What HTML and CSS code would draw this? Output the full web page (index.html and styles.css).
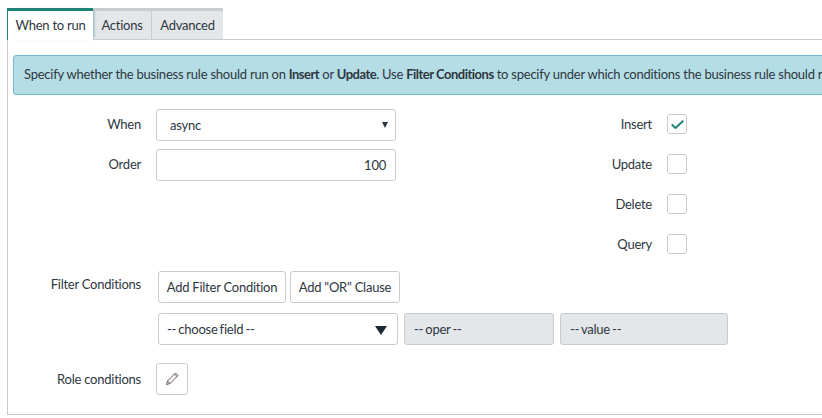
FILE: index.html
```html
<!DOCTYPE html>
<html lang="en">
<head>
    <meta charset="UTF-8">
    <title>Business Rule</title>
    <link rel="stylesheet" href="styles.css">
</head>
<body>
    <div class="tabs">
        <div class="tab tab-active">When to run</div>
        <div class="tab tab-actions">Actions</div>
        <div class="tab tab-advanced">Advanced</div>
    </div>

    <div class="panel">
        <div class="alert">Specify whether the business rule should run on <b>Insert</b> or <b>Update</b>. Use <b>Filter Conditions</b> to specify under which conditions the business rule should run.</div>

        <div class="columns">
            <div class="col-left">
                <div class="row">
                    <label class="label">When</label>
                    <div class="control select-when">async<span class="arrow-small"></span></div>
                </div>
                <div class="row">
                    <label class="label">Order</label>
                    <div class="control input-order">100</div>
                </div>
            </div>
            <div class="col-right">
                <div class="check-row">
                    <label class="label-right">Insert</label>
                    <div class="checkbox">
                        <svg width="13" height="9" viewBox="0 0 13 9"><path d="M0.7 4.5 L4.5 8 L12.3 0.7" fill="none" stroke="#1f8476" stroke-width="2"/></svg>
                    </div>
                </div>
                <div class="check-row">
                    <label class="label-right">Update</label>
                    <div class="checkbox"></div>
                </div>
                <div class="check-row">
                    <label class="label-right">Delete</label>
                    <div class="checkbox"></div>
                </div>
                <div class="check-row">
                    <label class="label-right">Query</label>
                    <div class="checkbox"></div>
                </div>
            </div>
        </div>

        <div class="filter">
            <label class="label filter-label">Filter Conditions</label>
            <div class="filter-body">
                <div class="filter-buttons">
                    <button class="btn btn-filter">Add Filter Condition</button>
                    <button class="btn btn-or">Add "OR" Clause</button>
                </div>
                <div class="filter-fields">
                    <div class="control field-choose">-- choose field --<span class="arrow-big"></span></div>
                    <div class="control field-disabled field-oper">-- oper --</div>
                    <div class="control field-disabled field-value">-- value --</div>
                </div>
            </div>
        </div>

        <div class="row role-row">
            <label class="label">Role conditions</label>
            <button class="btn btn-edit">
                <svg width="14" height="14" viewBox="0 0 14 14"><path d="M1.5 12.5 L2.5 9 L10.5 1 L13 3.5 L5 11.5 Z M2.5 9 L5 11.5 M9.5 2 L12 4.5" fill="none" stroke="#6b5256" stroke-width="1"/></svg>
            </button>
        </div>
    </div>
</body>
</html>
```

FILE: styles.css
```css
body {
    margin: 0;
    padding: 8px 0 0 7px;
    height: 418px;
    box-sizing: border-box;
    overflow: hidden;
    background-color: #fff;
    color: #2e3741;
    font-family: "Lato", "Noto Sans", sans-serif;
    font-size: 13px;
    letter-spacing: -0.24px;
}

.tabs {
    display: flex;
    height: 32px;
}

.tab {
    box-sizing: border-box;
    height: 32px;
    padding-top: 6px;
    background-color: #e4e7ea;
    border-top: 3px solid #cbcbcb;
    border-bottom: 1px solid #cbcbcb;
    border-right: 1px solid #cbcbcb;
    text-align: center;
}

.tab-active {
    position: relative;
    width: 86px;
    background-color: #fff;
    border-top: 3px solid #1f8476;
    border-left: 1px solid #1f8476;
    border-bottom: none;
    border-right: none;
    box-shadow: 3px 0 3px -2px #7fb5ae;
}

.tab-actions {
    width: 59px;
}

.tab-advanced {
    width: 71px;
    border-right: none;
}

.panel {
    box-sizing: border-box;
    height: 376px;
    margin-top: -1px;
    padding: 15px 0 0 5px;
    border: 1px solid #cbcbcb;
    border-right: none;
}

.alert {
    box-sizing: border-box;
    width: 900px;
    height: 40px;
    padding: 10px;
    background-color: #b5dde5;
    border: 1px solid #6fbbd0;
    border-radius: 3px;
    white-space: nowrap;
}

.alert b {
    letter-spacing: -0.5px;
}

.columns {
    display: flex;
    margin-top: 14px;
}

.col-left {
    width: 391px;
}

.col-left .label {
    padding-bottom: 2px;
}

.row {
    display: flex;
    align-items: center;
    margin-bottom: 8px;
}

.label {
    width: 128px;
    margin-right: 15px;
    text-align: right;
}

.control {
    box-sizing: border-box;
    height: 32px;
    background-color: #fff;
    border: 1px solid #cbcbcb;
    border-radius: 3px;
    line-height: 30px;
}

.select-when {
    position: relative;
    width: 240px;
    padding-left: 13px;
}

.arrow-small {
    position: absolute;
    right: 7px;
    top: 12px;
    border-left: 3px solid transparent;
    border-right: 3px solid transparent;
    border-top: 6px solid #2e3741;
}

.input-order {
    width: 240px;
    padding-right: 9px;
    text-align: right;
}

.col-right {
    padding-top: 5px;
}

.check-row {
    display: flex;
    align-items: center;
    height: 20px;
    margin-bottom: 20px;
}

.label-right {
    width: 248px;
    margin-right: 15px;
    text-align: right;
}

.checkbox {
    display: flex;
    align-items: center;
    justify-content: center;
    box-sizing: border-box;
    width: 20px;
    height: 20px;
    border: 1px solid #cbcbcb;
    border-radius: 3px;
}

.filter {
    display: flex;
    margin-top: -3px;
}

.filter-label {
    margin-right: 17px;
    padding-top: 5px;
}

.filter-buttons {
    display: flex;
    gap: 4px;
}

.btn {
    box-sizing: border-box;
    height: 32px;
    padding: 0;
    background-color: #fff;
    border: 1px solid #cbcbcb;
    border-radius: 3px;
    color: inherit;
    font-family: inherit;
    font-size: inherit;
    letter-spacing: inherit;
}

.btn-filter {
    width: 128px;
}

.btn-or {
    width: 110px;
}

.filter-fields {
    display: flex;
    gap: 6px;
    margin-top: 10px;
    word-spacing: -1px;
}

.field-choose {
    position: relative;
    width: 240px;
    padding-left: 8px;
}

.arrow-big {
    position: absolute;
    right: 10px;
    top: 12px;
    border-left: 6px solid transparent;
    border-right: 6px solid transparent;
    border-top: 9px solid #1e2a33;
}

.field-disabled {
    padding-left: 9px;
    background-color: #e4e7ea;
}

.field-oper {
    width: 150px;
}

.field-value {
    width: 168px;
}

.role-row {
    margin-top: 18px;
}

.btn-edit {
    display: flex;
    align-items: center;
    justify-content: center;
    width: 32px;
}
```
